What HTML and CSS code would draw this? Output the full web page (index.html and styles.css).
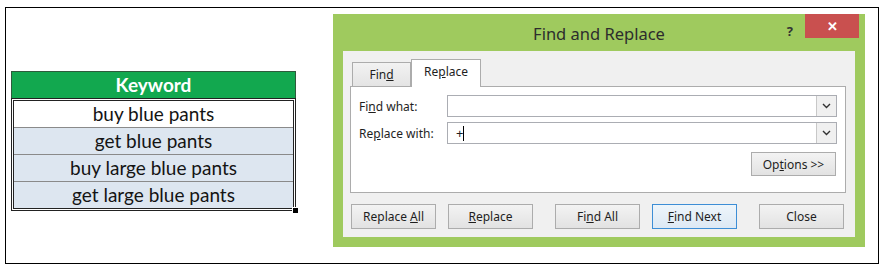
FILE: index.html
```html
<!DOCTYPE html>
<html lang="en">

<head>
    <meta charset="UTF-8">
    <title>Find and Replace</title>
    <link rel="stylesheet" href="styles.css">
</head>

<body>
    <div class="frame">

        <!-- Hoja: lista de keywords -->
        <div class="sheet">
            <div class="sheet-head">Keyword</div>
            <div class="sheet-body">
                <div class="cell">buy blue pants</div>
                <div class="cell alt">get blue pants</div>
                <div class="cell alt">buy large blue pants</div>
                <div class="cell alt">get large blue pants</div>
                <span class="handle"></span>
            </div>
        </div>

        <!-- Dialogo Find and Replace -->
        <div class="dialog">
            <div class="titlebar">
                <span class="title">Find and Replace</span>
                <span class="help">?</span>
                <span class="close">&#x2715;</span>
            </div>
            <div class="dialog-body">
                <div class="tabs">
                    <span class="tab">Fin<u>d</u></span>
                    <span class="tab active">Re<u>p</u>lace</span>
                </div>
                <div class="panel">
                    <div class="field">
                        <label>Fi<u>n</u>d what:</label>
                        <div class="combo">
                            <span class="value"></span>
                            <span class="drop"><svg width="9" height="6" viewBox="0 0 9 6"><path d="M1 1l3.5 3.5L8 1" fill="none" stroke="#333" stroke-width="1.4"/></svg></span>
                        </div>
                    </div>
                    <div class="field">
                        <label>Re<u>p</u>lace with:</label>
                        <div class="combo">
                            <span class="value">+<span class="caret"></span></span>
                            <span class="drop"><svg width="9" height="6" viewBox="0 0 9 6"><path d="M1 1l3.5 3.5L8 1" fill="none" stroke="#333" stroke-width="1.4"/></svg></span>
                        </div>
                    </div>
                    <div class="options-row">
                        <button class="btn options">Op<u>t</u>ions &gt;&gt;</button>
                    </div>
                </div>
                <div class="buttons">
                    <button class="btn">Replace <u>A</u>ll</button>
                    <button class="btn"><u>R</u>eplace</button>
                    <button class="btn wide-gap">Fi<u>n</u>d All</button>
                    <button class="btn default"><u>F</u>ind Next</button>
                    <button class="btn wide-gap">Close</button>
                </div>
            </div>
        </div>

    </div>
</body>

</html>
```

FILE: styles.css
```css
body {
    margin: 0;
    background: #fff;
}

.frame {
    display: flex;
    align-items: flex-start;
    margin: 7px 0 0 5px;
    width: 872px;
    height: 255px;
    border: 1px solid #000;
}

/* --- Hoja de Excel --- */
.sheet {
    margin: 63px 0 0 5px;
    width: 285px;
    font-family: Lato, "Open Sans", sans-serif;
    font-size: 19px;
    color: #141414;
}

.sheet-head {
    height: 26px;
    line-height: 26px;
    text-align: center;
    background: #12a84f;
    color: #fff;
    font-weight: bold;
    border: 1px solid #2e5a3c;
    border-bottom: none;
}

.sheet-body {
    position: relative;
    border: 3px double #222;
}

.cell {
    height: 26px;
    line-height: 26px;
    text-align: center;
    background: #fff;
    border-bottom: 1px solid #8a8a8a;
}

.cell:last-of-type {
    border-bottom: none;
}

.cell.alt {
    background: #dde6f0;
}

.handle {
    position: absolute;
    right: -6px;
    bottom: -6px;
    width: 5px;
    height: 5px;
    background: #000;
    border: 1px solid #fff;
}

/* --- Dialogo --- */
.dialog {
    margin: 6px 0 0 37px;
    width: 532px;
    background: #9fca5e;
    font-family: "Noto Sans", "Open Sans", sans-serif;
    font-size: 12px;
    color: #1e1e1e;
}

.titlebar {
    position: relative;
    height: 37px;
    display: flex;
    justify-content: center;
    align-items: center;
}

.title {
    font-size: 16.5px;
    color: #2d2d2d;
    padding-top: 2px;
}

.help {
    position: absolute;
    right: 72px;
    top: 8px;
    font-weight: bold;
    font-size: 13px;
    color: #333;
}

.close {
    position: absolute;
    right: 6px;
    top: 0;
    width: 54px;
    height: 24px;
    background: #c9504f;
    color: #fff;
    font-size: 13px;
    font-weight: bold;
    display: flex;
    justify-content: center;
    align-items: center;
}

.dialog-body {
    margin: 0 10px 10px 10px;
    background: #f0f0f0;
    padding: 8px 9px 8px 7px;
}

.tabs {
    display: flex;
    align-items: flex-end;
    height: 27px;
    padding-left: 2px;
}

.tab {
    height: 23px;
    width: 57px;
    text-align: center;
    line-height: 23px;
    background: linear-gradient(#f2f2f2, #e4e4e4);
    border: 1px solid #acacac;
    border-bottom: none;
}

.tab.active {
    height: 27px;
    width: 68px;
    line-height: 24px;
    background: #fff;
    position: relative;
    top: 1px;
}

.panel {
    box-sizing: border-box;
    height: 107px;
    background: #fff;
    border: 1px solid #acacac;
    padding: 8px 8px 0 8px;
}

.field {
    display: flex;
    align-items: center;
    margin-bottom: 5px;
}

.field label {
    width: 88px;
}

.combo {
    display: flex;
    width: 388px;
    height: 20px;
    border: 1px solid #abadb3;
    background: #fff;
}

.value {
    flex: 1;
    padding-left: 8px;
    line-height: 20px;
    font-size: 13px;
}

.caret {
    display: inline-block;
    width: 1px;
    height: 15px;
    background: #000;
    vertical-align: -3px;
}

.drop {
    width: 19px;
    height: 20px;
    border-left: 1px solid #c8c8c8;
    background: #f0f0f0;
    display: flex;
    justify-content: center;
    align-items: center;
}

.options-row {
    display: flex;
    justify-content: flex-end;
    margin-top: 8px;
    padding-right: 1px;
}

.btn {
    font-family: "Noto Sans", "Open Sans", sans-serif;
    font-size: 12px;
    color: #1e1e1e;
    height: 25px;
    width: 85px;
    padding: 0;
    background: linear-gradient(#f3f3f3, #e2e2e2);
    border: 1px solid #acacac;
    border-radius: 0;
}

.btn.options {
    height: 24px;
}

.buttons {
    display: flex;
    margin-top: 11px;
    padding-left: 1px;
    gap: 12px;
}

.btn.wide-gap {
    margin-left: 10px;
}

.btn.default {
    border-color: #3d8ed6;
    background: linear-gradient(#eef5fb, #dde9f4);
}
```
